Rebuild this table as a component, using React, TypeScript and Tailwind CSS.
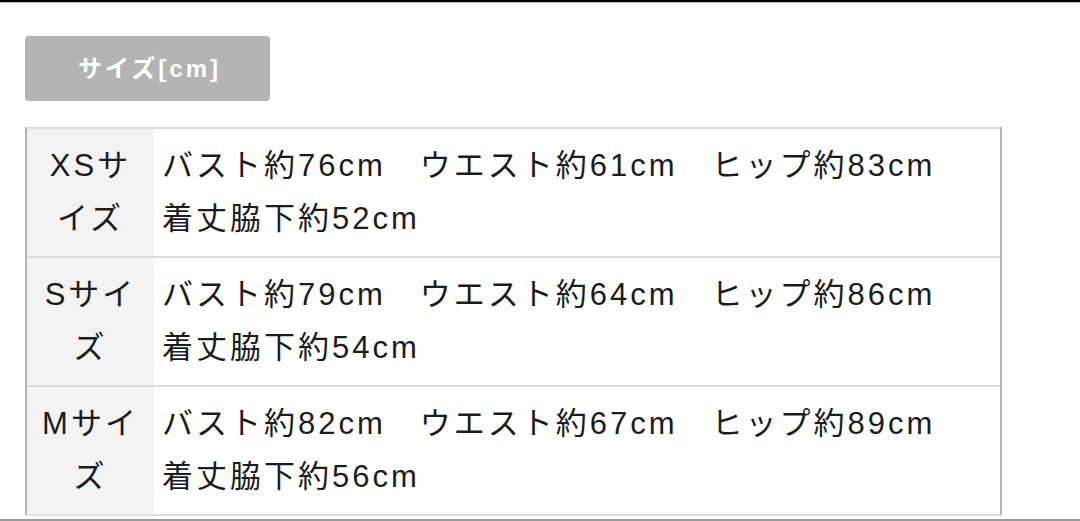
import React from 'react';

const rows = [
  {
    size: ['XSサ', 'イズ'],
    lines: ['バスト約76cm　ウエスト約61cm　ヒップ約83cm', '着丈脇下約52cm'],
  },
  {
    size: ['Sサイ', 'ズ'],
    lines: ['バスト約79cm　ウエスト約64cm　ヒップ約86cm', '着丈脇下約54cm'],
  },
  {
    size: ['Mサイ', 'ズ'],
    lines: ['バスト約82cm　ウエスト約67cm　ヒップ約89cm', '着丈脇下約56cm'],
  },
];

export default function App() {
  return (
    <div
      className="w-[1080px] h-[521px] bg-white overflow-hidden flex flex-col"
      style={{ fontFamily: '"Liberation Sans", "Noto Sans CJK JP", sans-serif' }}
    >
      {/* top edge */}
      <div className="h-[3px] bg-black border-b border-[#bbb]" />

      <div className="flex-1 px-[25px] pt-[33px]">
        {/* title tab */}
        <div className="w-[245px] h-[65px] bg-[#b4b4b4] rounded-[4px] flex items-center justify-center text-white font-bold text-[24px] tracking-[3px] pl-[4px]">
          サイズ[cm]
        </div>

        {/* size table */}
        <div className="mt-[26px] w-[977px] border-x-2 border-[#b5b5b5] border-b-2 border-b-[#e0e0e0] text-[#1c1c1c] text-[31px] leading-[53px] tracking-[3px]">
          {rows.map((r, i) => (
            <div key={i} className="flex h-[129px] border-t-2 border-[#dcdcdc]">
              <div className="w-[127px] bg-[#f3f3f3] flex flex-col items-center justify-center pb-[2px]">
                {r.size.map((s) => (
                  <div key={s}>{s}</div>
                ))}
              </div>
              <div className="flex-1 pl-[8px] flex flex-col justify-center pb-[2px]">
                {r.lines.map((l) => (
                  <div key={l} className="whitespace-pre">
                    {l}
                  </div>
                ))}
              </div>
            </div>
          ))}
        </div>
      </div>

      {/* bottom edge */}
      <div className="h-[2px] bg-[#9a9a9a]" />
    </div>
  );
}
